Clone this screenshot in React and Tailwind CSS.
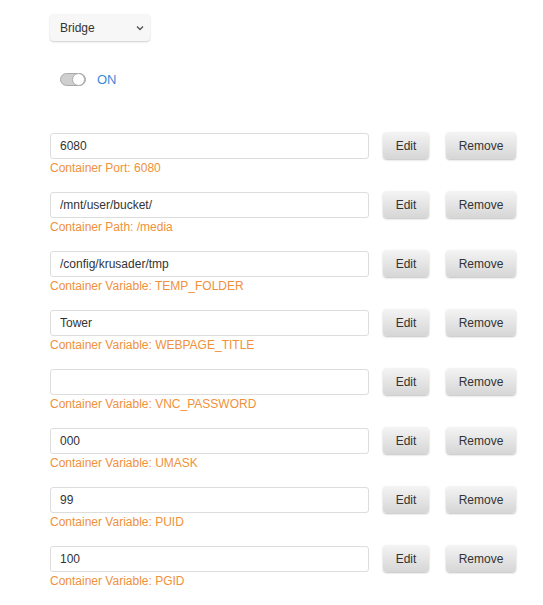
import { useState } from 'react';

const rows = [
  { value: '6080', label: 'Container Port: 6080' },
  { value: '/mnt/user/bucket/', label: 'Container Path: /media' },
  { value: '/config/krusader/tmp', label: 'Container Variable: TEMP_FOLDER' },
  { value: 'Tower', label: 'Container Variable: WEBPAGE_TITLE' },
  { value: '', label: 'Container Variable: VNC_PASSWORD' },
  { value: '000', label: 'Container Variable: UMASK' },
  { value: '99', label: 'Container Variable: PUID' },
  { value: '100', label: 'Container Variable: PGID' },
];

const btn =
  'h-[27px] rounded-[4px] bg-gradient-to-b from-[#f4f4f4] to-[#d6d6d6] text-[12px] text-[#333] shadow-[0_1px_2px_rgba(0,0,0,0.25)]';

const App = () => {
  const [on, setOn] = useState(true);

  return (
    <div className="min-h-[605px] bg-white pl-[50px] pt-[14px] font-['Liberation_Sans',Arial,sans-serif]">
      <div className="flex h-[27px] w-[100px] items-center justify-between rounded-[4px] bg-[#f7f7f7] pl-[10px] pr-[5px] text-[12px] text-[#333] shadow-[0_1px_2px_rgba(0,0,0,0.2)]">
        <span>Bridge</span>
        <svg width="10" height="10" viewBox="0 0 10 10">
          <path d="M2 3.5 L5 6.5 L8 3.5" fill="none" stroke="#555" strokeWidth="1.4" />
        </svg>
      </div>

      <div className="mt-[32px] flex h-[13px] items-center pl-[10px]">
        <button
          onClick={() => setOn(!on)}
          className="flex h-[13px] w-[26px] items-center justify-end rounded-full border border-[#aaa] bg-[#cfcfcf]"
        >
          <span className="h-[13px] w-[13px] rounded-full border border-[#aaa] bg-white" />
        </button>
        <span className="ml-[11px] text-[13px] leading-[13px] text-[#3b8ad8]">{on ? 'ON' : 'OFF'}</span>
      </div>

      <div className="mt-[46px] flex flex-col gap-[16px]">
        {rows.map((r) => (
          <div key={r.label}>
            <div className="flex h-[27px] items-center">
              <input
                type="text"
                defaultValue={r.value}
                className="h-[26px] w-[319px] rounded-[3px] border border-[#ddd] px-[9px] text-[12px] text-[#333] outline-none"
              />
              <button className={`${btn} ml-[14px] w-[46px]`}>Edit</button>
              <button className={`${btn} ml-[17px] w-[70px]`}>Remove</button>
            </div>
            <div className="mt-[2px] text-[12px] leading-[14px] text-[#f0913b]">{r.label}</div>
          </div>
        ))}
      </div>
    </div>
  );
};

export default App;
